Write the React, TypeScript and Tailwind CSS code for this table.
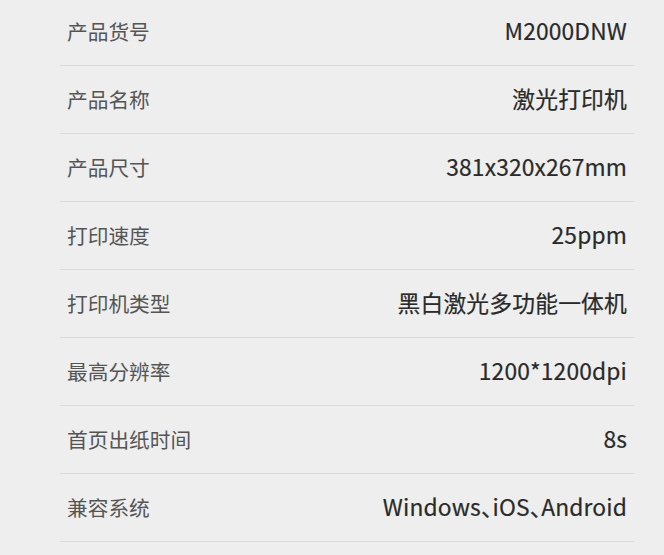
import React from "react";

const rows: [string, string][] = [
  ["产品货号", "M2000DNW"],
  ["产品名称", "激光打印机"],
  ["产品尺寸", "381x320x267mm"],
  ["打印速度", "25ppm"],
  ["打印机类型", "黑白激光多功能一体机"],
  ["最高分辨率", "1200*1200dpi"],
  ["首页出纸时间", "8s"],
  ["兼容系统", "Windows、iOS、Android"],
];

export default function App() {
  return (
    <div
      className="w-[664px] h-[555px] overflow-hidden bg-[#eeeeee]"
      style={{ fontFamily: '"Noto Sans CJK SC", "Noto Sans", sans-serif' }}
    >
      <div className="ml-[60px] w-[574px] -mt-[2px]">
        {rows.map(([k, v]) => (
          <div
            key={k}
            className="h-[68px] border-b border-[#dcdcdc] flex items-center justify-between px-[7px]"
          >
            <span className="text-[20.7px] text-[#555555] leading-none">{k}</span>
            <span className="text-[22.8px] text-[#2a2a2a] leading-none tracking-[0.15px] [font-feature-settings:'halt'] [-webkit-text-stroke:0.2px_#2a2a2a]">
              {v}
            </span>
          </div>
        ))}
      </div>
    </div>
  );
}
